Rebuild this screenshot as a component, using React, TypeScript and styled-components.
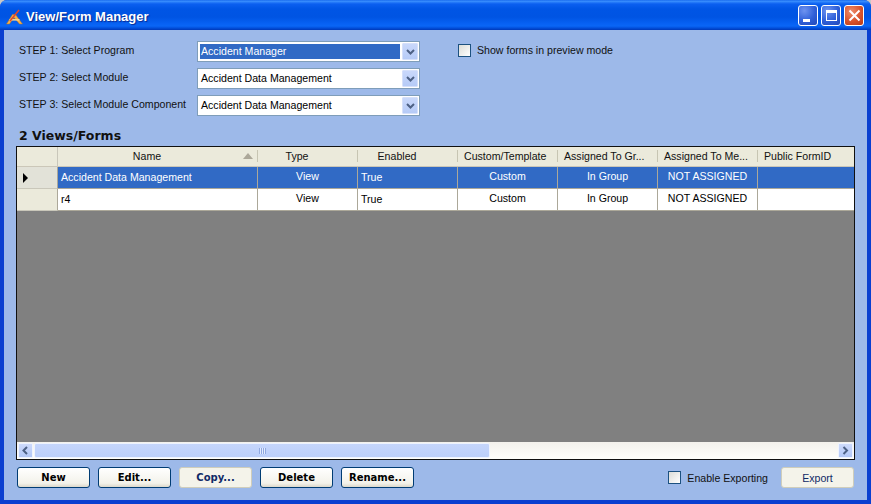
import React from "react";
import styled, { createGlobalStyle } from "styled-components";

const GlobalStyle = createGlobalStyle`
  html, body {
    margin: 0;
    padding: 0;
    background: #c8c8c8;
  }
  body {
    font-family: "Liberation Sans", Arial, sans-serif;
    font-size: 10.6px;
    color: #000;
  }
`;

const columns = [
  { title: "Name", width: 200, sorted: true },
  { title: "Type", width: 100 },
  { title: "Enabled", width: 100 },
  { title: "Custom/Template", width: 100 },
  { title: "Assigned To Gr...", width: 100 },
  { title: "Assigned To Me...", width: 100 },
  { title: "Public FormID", width: 97 },
];

const rows = [
  { name: "Accident Data Management", selected: true },
  { name: "r4", selected: false },
];

const Chevron = ({ dir = "down" }: { dir?: "down" | "left" | "right" }) => {
  const points =
    dir === "down" ? "1,1 4.5,4.5 8,1" : dir === "left" ? "5,1 1.5,4.5 5,8" : "1.5,1 5,4.5 1.5,8";
  const box = dir === "down" ? "0 0 9 6" : "0 0 7 9";
  return (
    <svg width={dir === "down" ? 9 : 7} height={dir === "down" ? 6 : 9} viewBox={box}>
      <polyline points={points} fill="none" stroke="#4d6185" strokeWidth="2" />
    </svg>
  );
};

const AppIcon = () => (
  <svg width="17" height="16" viewBox="0 0 17 16">
    <path d="M0.5 15 L6.5 5.5 L9.5 5.5 L16.5 15 L13.5 15 L8 8.5 L3.5 15 Z" fill="#f6b04a" stroke="#b5782a" strokeWidth="0.5" />
    <rect x="3.5" y="10" width="10" height="1.6" fill="#f9d48a" />
    <line x1="4" y1="12" x2="13" y2="1" stroke="#e0472e" strokeWidth="1.6" />
  </svg>
);

const Combo = ({ value, selected }: { value: string; selected?: boolean }) => (
  <ComboBox>
    <ComboText $selected={selected}>{value}</ComboText>
    <ComboButton>
      <Chevron />
    </ComboButton>
  </ComboBox>
);

export default function App() {
  return (
    <>
      <GlobalStyle />
      <Window>
        <TitleBar>
          <AppIcon />
          <TitleText>View/Form Manager</TitleText>
          <TitleButtons>
            <CaptionButton>
              <MinGlyph />
            </CaptionButton>
            <CaptionButton>
              <MaxGlyph />
            </CaptionButton>
            <CaptionButton $close>
              <svg width="13" height="13" viewBox="0 0 13 13">
                <path d="M1.5 1.5 L11.5 11.5 M11.5 1.5 L1.5 11.5" stroke="#fff" strokeWidth="2" />
              </svg>
            </CaptionButton>
          </TitleButtons>
        </TitleBar>

        <Body>
          <Steps>
            <StepLabel>STEP 1: Select Program</StepLabel>
            <Combo value="Accident Manager" selected />
            <CheckRow>
              <CheckBox />
              <span>Show forms in preview mode</span>
            </CheckRow>
            <StepLabel>STEP 2: Select Module</StepLabel>
            <Combo value="Accident Data Management" />
            <span />
            <StepLabel>STEP 3: Select Module Component</StepLabel>
            <Combo value="Accident Data Management" />
            <span />
          </Steps>

          <Heading>2 Views/Forms</Heading>

          <GridPanel>
            <HeaderRow>
              <Corner />
              {columns.map((c) => (
                <HeaderCell key={c.title} $w={c.width}>
                  {c.title}
                  {c.sorted && <SortArrow />}
                </HeaderCell>
              ))}
            </HeaderRow>

            {rows.map((r) => (
              <DataRow key={r.name} $selected={r.selected}>
                <RowHeader $selected={r.selected}>
                  {r.selected && <RowPointer />}
                </RowHeader>
                <Cell $w={200} $pad>
                  {r.name}
                </Cell>
                <Cell $w={100} $center $raise>
                  View
                </Cell>
                <Cell $w={100} $pad>
                  True
                </Cell>
                <Cell $w={100} $center $raise>
                  Custom
                </Cell>
                <Cell $w={100} $center $raise>
                  In Group
                </Cell>
                <Cell $w={100} $center $raise>
                  NOT ASSIGNED
                </Cell>
                <Cell $w={97} />
              </DataRow>
            ))}

            <EmptyArea />

            <ScrollBar>
              <ScrollButton>
                <Chevron dir="left" />
              </ScrollButton>
              <ScrollTrack>
                <ScrollThumb>
                  <Grip />
                </ScrollThumb>
              </ScrollTrack>
              <ScrollButton>
                <Chevron dir="right" />
              </ScrollButton>
            </ScrollBar>
          </GridPanel>

          <Footer>
            <Button $bold>New</Button>
            <Button $bold>Edit...</Button>
            <Button $bold $disabled>
              Copy...
            </Button>
            <Button $bold>Delete</Button>
            <Button $bold>Rename...</Button>
            <FooterRight>
              <ExportCheck>
                <CheckBox />
                <span>Enable Exporting</span>
              </ExportCheck>
              <Button $disabled>Export</Button>
            </FooterRight>
          </Footer>
        </Body>
      </Window>
    </>
  );
}

const Window = styled.div`
  width: 871px;
  height: 504px;
  display: flex;
  flex-direction: column;
  overflow: hidden;
  border-radius: 7px 7px 0 0;
  background: #0a3fd0;
`;

const TitleBar = styled.div`
  height: 30px;
  flex: none;
  display: flex;
  align-items: center;
  padding: 3px 7px 0 6px;
  gap: 3px;
  box-sizing: border-box;
  background: linear-gradient(
    to bottom,
    #0a5be8 0,
    #3f94ff 1px,
    #2b80fa 2px,
    #0b5ff0 4px,
    #0055e5 9px,
    #0054e3 17px,
    #0660f2 23px,
    #0a66f6 26px,
    #0250dc 28px,
    #0038b8 30px
  );
`;

const TitleText = styled.div`
  color: #fff;
  font-weight: bold;
  font-size: 13px;
  text-shadow: 1px 1px 1px #0a2a90;
`;

const TitleButtons = styled.div`
  margin-left: auto;
  display: flex;
  gap: 3px;
  margin-top: -3px;
`;

const CaptionButton = styled.div<{ $close?: boolean }>`
  width: 20px;
  height: 21px;
  box-sizing: border-box;
  border: 1px solid #fff;
  border-radius: 3px;
  display: flex;
  align-items: center;
  justify-content: center;
  background: ${(p) =>
    p.$close
      ? "radial-gradient(circle at 35% 30%, #ee8e6c, #d9532c 55%, #b93a16)"
      : "radial-gradient(circle at 30% 25%, #6e93f0, #2f5fd8 55%, #2349b8)"};
`;

const MinGlyph = styled.div`
  width: 7px;
  height: 3px;
  background: #fff;
  align-self: flex-end;
  margin: 0 4px 3px 0;
`;

const MaxGlyph = styled.div`
  width: 11px;
  height: 11px;
  box-sizing: border-box;
  border: 1px solid #fff;
  border-top-width: 3px;
`;

const Body = styled.div`
  flex: 1;
  margin: 0 4px 4px;
  padding: 11px 12px 0;
  background: #9db9e9;
  display: flex;
  flex-direction: column;
  min-height: 0;
`;

const Steps = styled.div`
  display: grid;
  grid-template-columns: 178px 223px 1fr;
  grid-auto-rows: 21px;
  row-gap: 6px;
  padding-left: 3px;
  align-items: center;
`;

const StepLabel = styled.div`
  color: #111;
  padding-bottom: 3px;
  white-space: nowrap;
`;

const ComboBox = styled.div`
  height: 21px;
  box-sizing: border-box;
  border: 1px solid #7f9db9;
  background: #fff;
  display: flex;
  align-items: center;
  padding: 1px;
`;

const ComboText = styled.div<{ $selected?: boolean }>`
  flex: 1;
  align-self: stretch;
  margin: 1px 2px 1px 1px;
  padding-left: 1px;
  line-height: 15px;
  background: ${(p) => (p.$selected ? "#316ac5" : "transparent")};
  color: ${(p) => (p.$selected ? "#fff" : "#000")};
`;

const ComboButton = styled.div`
  width: 16px;
  align-self: stretch;
  display: flex;
  align-items: center;
  justify-content: center;
  box-sizing: border-box;
  border: 1px solid #d5e0fa;
  border-radius: 1px;
  background: linear-gradient(to bottom, #c9d8fb, #b6cbf7);
`;

const CheckRow = styled.label`
  display: flex;
  align-items: center;
  gap: 6px;
  color: #111;
  margin-left: 38px;
  padding-bottom: 3px;
  white-space: nowrap;
`;

const ExportCheck = styled(CheckRow)`
  margin-left: 0;
  padding-bottom: 0;
`;

const CheckBox = styled.span`
  width: 13px;
  height: 13px;
  flex: none;
  box-sizing: border-box;
  border: 1px solid #1c5180;
  background: linear-gradient(135deg, #dcdcd7, #ffffff);
`;

const Heading = styled.div`
  font-family: "DejaVu Sans", sans-serif;
  font-weight: bold;
  font-size: 12.5px;
  line-height: 15px;
  margin: 12px 0 3px 3px;
  color: #111;
`;

const GridPanel = styled.div`
  height: 314px;
  flex: none;
  box-sizing: border-box;
  border: 1px solid #101010;
  display: flex;
  flex-direction: column;
  background: #808080;
`;

const HeaderRow = styled.div`
  display: flex;
  height: 20px;
  flex: none;
  background: #ebeadb;
  border-bottom: 1px solid #cbc7b8;
  box-sizing: border-box;
`;

const Corner = styled.div`
  width: 41px;
  flex: none;
  box-sizing: border-box;
  border-right: 1px solid #c9c7ba;
`;

const HeaderCell = styled.div<{ $w: number }>`
  width: ${(p) => p.$w}px;
  flex: none;
  position: relative;
  box-sizing: border-box;
  padding: 0 28px 0 6px;
  text-align: center;
  line-height: 18px;
  color: #111;
  white-space: nowrap;
  overflow: hidden;
  &::after {
    content: "";
    position: absolute;
    right: 0;
    top: 3px;
    bottom: 4px;
    width: 1px;
    background: #c7c5b2;
  }
  &:last-child::after {
    display: none;
  }
`;

const SortArrow = styled.span`
  position: absolute;
  right: 5px;
  top: 6px;
  width: 0;
  height: 0;
  border-left: 5px solid transparent;
  border-right: 5px solid transparent;
  border-bottom: 6px solid #aca899;
`;

const DataRow = styled.div<{ $selected?: boolean }>`
  display: flex;
  height: 22px;
  flex: none;
  box-sizing: border-box;
  border-bottom: 1px solid #aca899;
  background: ${(p) => (p.$selected ? "#316ac5" : "#fff")};
  color: ${(p) => (p.$selected ? "#fff" : "#000")};
`;

const RowHeader = styled.div<{ $selected?: boolean }>`
  width: 41px;
  flex: none;
  box-sizing: border-box;
  display: flex;
  align-items: center;
  padding-left: 6px;
  background: ${(p) => (p.$selected ? "#e2e2d8" : "#ebeadb")};
  border-right: 1px solid #aca899;
  margin-bottom: -1px;
  border-bottom: 1px solid #c9c7ba;
`;

const RowPointer = styled.span`
  width: 0;
  height: 0;
  border-top: 5px solid transparent;
  border-bottom: 5px solid transparent;
  border-left: 5px solid #000;
`;

const Cell = styled.div<{ $w?: number; $center?: boolean; $pad?: boolean; $raise?: boolean }>`
  width: ${(p) => p.$w}px;
  flex: none;
  box-sizing: border-box;
  border-right: 1px solid #aca899;
  text-align: ${(p) => (p.$center ? "center" : "left")};
  padding-left: ${(p) => (p.$pad ? "3px" : "0")};
  line-height: ${(p) => (p.$raise ? "19px" : "21px")};
  white-space: nowrap;
  overflow: hidden;
  &:last-child {
    border-right: none;
  }
`;

const EmptyArea = styled.div`
  flex: 1;
  background: #808080;
`;

const ScrollBar = styled.div`
  height: 17px;
  flex: none;
  display: flex;
  align-items: stretch;
  background: linear-gradient(to bottom, #f3f1ec, #fefefb);
  padding: 1px;
  box-sizing: border-box;
  gap: 1px;
`;

const ScrollButton = styled.div`
  width: 15px;
  flex: none;
  display: flex;
  align-items: center;
  justify-content: center;
  box-sizing: border-box;
  border: 1px solid #eef3fe;
  border-radius: 1px;
  background: linear-gradient(to bottom, #cddafc, #b3c8f6);
`;

const ScrollTrack = styled.div`
  flex: 1;
  display: flex;
`;

const ScrollThumb = styled.div`
  width: 456px;
  box-sizing: border-box;
  border: 1px solid #eef3fe;
  border-radius: 2px;
  background: linear-gradient(to bottom, #c5d6fc, #bccffa);
  display: flex;
  align-items: center;
  justify-content: center;
`;

const Grip = styled.div`
  width: 7px;
  height: 6px;
  background: repeating-linear-gradient(to right, #8fa8e0 0 1px, #e4ecfe 1px 2px);
`;

const Footer = styled.div`
  display: flex;
  align-items: center;
  gap: 8px;
  margin-top: 7px;
  padding-left: 1px;
`;

const FooterRight = styled.div`
  margin-left: auto;
  display: flex;
  align-items: center;
  gap: 13px;
  margin-right: 1px;
`;

const Button = styled.div<{ $bold?: boolean; $disabled?: boolean }>`
  width: 73px;
  height: 21px;
  box-sizing: border-box;
  border: 1px solid ${(p) => (p.$disabled ? "#cfcdbb" : "#003c74")};
  border-radius: 3px;
  display: flex;
  align-items: center;
  justify-content: center;
  font-family: ${(p) => (p.$bold ? '"DejaVu Sans", sans-serif' : "inherit")};
  font-size: ${(p) => (p.$bold ? "10px" : "inherit")};
  font-weight: ${(p) => (p.$bold ? "bold" : "normal")};
  color: ${(p) => (p.$disabled ? "#0f2a66" : "#000")};
  background: ${(p) => (p.$disabled ? "#f4f3ea" : "linear-gradient(to bottom, #ffffff, #f3f2ea 80%, #dcd8ca)")};
`;
